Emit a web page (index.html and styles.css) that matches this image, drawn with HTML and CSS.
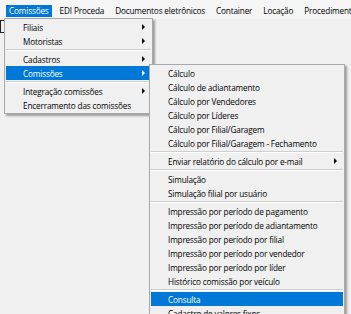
FILE: index.html
```html
<!DOCTYPE html>
<html lang="pt">
<head>
<meta charset="utf-8">
<link rel="stylesheet" href="styles.css">
</head>
<body>
<div class="menubar">
  <div class="mb-item active">Comissões</div>
  <div class="mb-item">EDI Proceda</div>
  <div class="mb-item">Documentos eletrônicos</div>
  <div class="mb-item">Container</div>
  <div class="mb-item">Locação</div>
  <div class="mb-item">Procedimento</div>
</div>
<div class="content">
  <div class="bracket"></div>
</div>

<div class="menu menu-main">
  <div class="item sub">Filiais<span class="arrow"></span></div>
  <div class="item sub">Motoristas<span class="arrow"></span></div>
  <div class="sep"></div>
  <div class="item sub">Cadastros<span class="arrow"></span></div>
  <div class="item sub hl">Comissões<span class="arrow"></span></div>
  <div class="sep"></div>
  <div class="item sub">Integração comissões<span class="arrow"></span></div>
  <div class="item">Encerramento das comissões</div>
</div>

<div class="menu menu-sub">
  <div class="item">Cálculo</div>
  <div class="item">Cálculo de adiantamento</div>
  <div class="item">Cálculo por Vendedores</div>
  <div class="item">Cálculo por Líderes</div>
  <div class="item">Cálculo por Filial/Garagem</div>
  <div class="item">Cálculo por Filial/Garagem - Fechamento</div>
  <div class="sep"></div>
  <div class="item sub">Enviar relatório do cálculo por e-mail<span class="arrow"></span></div>
  <div class="sep"></div>
  <div class="item">Simulação</div>
  <div class="item">Simulação filial por usuário</div>
  <div class="sep"></div>
  <div class="item">Impressão por período de pagamento</div>
  <div class="item">Impressão por período de adiantamento</div>
  <div class="item">Impressão por período por filial</div>
  <div class="item">Impressão por período por vendedor</div>
  <div class="item">Impressão por período por líder</div>
  <div class="item">Histórico comissão por veículo</div>
  <div class="sep"></div>
  <div class="item hl">Consulta</div>
  <div class="item">Cadastro de valores fixos</div>
</div>
</body>
</html>
```

FILE: styles.css
```css
html, body {
  margin: 0;
  padding: 0;
}
body {
  width: 351px;
  height: 314px;
  overflow: hidden;
  background: #f0f0f0;
  font-family: "Open Sans", "Noto Sans", sans-serif;
  font-size: 8.2px;
  letter-spacing: -0.15px;
  color: #000;
  position: relative;
}
.menubar {
  display: flex;
  padding: 5px 0 2px 6px;
  background: #f5f5f5;
  height: 12px;
}
.mb-item {
  padding: 0 3px;
  margin-right: 5px;
  height: 12px;
  line-height: 12px;
  white-space: nowrap;
}
.mb-item.active {
  background: #0078d7;
  color: #fff;
}
.content {
  padding-top: 1px;
}
.bracket {
  width: 3px;
  height: 11px;
  border: 1px solid #222;
  border-right: none;
}
.menu {
  position: absolute;
  background: #f0f0f0;
  border: 1px solid #a8a8a8;
  box-shadow: 2px 2px 2px rgba(0, 0, 0, 0.35);
  padding: 1px 0;
}
.menu-main {
  left: 4px;
  top: 18px;
  width: 147px;
}
.menu-sub {
  left: 149px;
  top: 64px;
  width: 194px;
}
.item {
  display: flex;
  align-items: center;
  justify-content: space-between;
  height: 14px;
  margin: 0 1px;
  padding-left: 17px;
  padding-right: 6px;
  white-space: nowrap;
}
.item.hl {
  background: #0078d7;
  color: #fff;
}
.arrow {
  width: 0;
  height: 0;
  border-top: 3px solid transparent;
  border-bottom: 3px solid transparent;
  border-left: 3px solid #000;
}
.hl .arrow {
  border-left-color: #fff;
}
.sep {
  height: 4px;
  margin: 0 1px;
  display: flex;
  flex-direction: column;
  justify-content: center;
}
.sep::before {
  content: "";
  display: block;
  height: 1px;
  background: #cfcfcf;
}
.sep::after {
  content: "";
  display: block;
  height: 1px;
  background: #ffffff;
}
```
